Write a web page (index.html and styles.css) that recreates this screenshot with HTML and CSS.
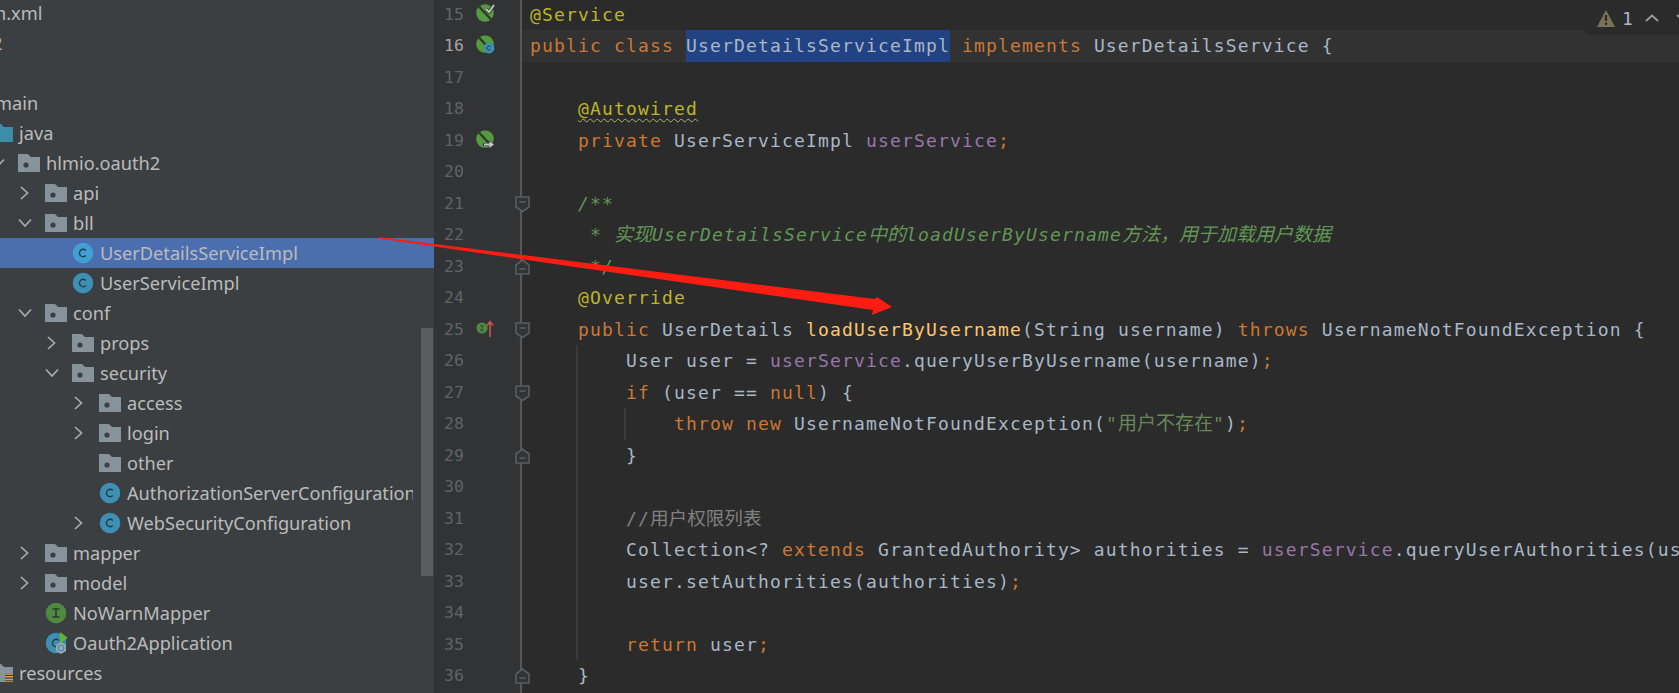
FILE: index.html
```html
<!DOCTYPE html>
<html lang="en">
<head>
<meta charset="utf-8">
<title>UserDetailsServiceImpl</title>
<link rel="stylesheet" href="styles.css">
</head>
<body>
<svg class="defs" aria-hidden="true">
  <symbol id="chev-r" viewBox="0 0 14 14"><path d="M3 1 9.500 7 3 13" fill="none" stroke="currentColor" stroke-width="1.700"/></symbol>
  <symbol id="chev-d" viewBox="0 0 14 14"><path d="M1 3.500 7 10 13 3.500" fill="none" stroke="currentColor" stroke-width="1.700"/></symbol>
  <symbol id="folder" viewBox="0 0 22 18"><path d="M0 0H10L13 3H22V18H0Z" fill="currentColor"/><circle cx="8" cy="11" r="2.600" fill="#3c3f41"/></symbol>
  <symbol id="folder-plain" viewBox="0 0 22 18"><path d="M0 0H10L13 3H22V18H0Z" fill="currentColor"/></symbol>
  <symbol id="cls" viewBox="0 0 22 22"><circle cx="11" cy="11" r="10.300" fill="currentColor"/><path d="M13.800 8.400A3.700 3.700 0 1 0 13.800 13.600" fill="none" stroke="#2c3a42" stroke-width="1.400"/></symbol>
  <symbol id="iface" viewBox="0 0 22 22"><circle cx="11" cy="11" r="10.300" fill="#4d8a3f"/><path d="M7.500 7H14.500M7.500 15H14.500M11 7V15" fill="none" stroke="#2c3a2a" stroke-width="1.500"/></symbol>
  <symbol id="bean" viewBox="0 0 18 18"><circle cx="9" cy="9" r="8.800" fill="#549a3f"/><path d="M3 2.500 15 15.500" stroke="#2f3a2c" stroke-width="2.400"/></symbol>
</svg>

<main class="ide">
  <aside class="sidebar">
    <div class="tree">
      <div class="node d-pom"><span class="slot"></span><span class="lead-file"></span><span class="label">pom.xml</span></div>
      <div class="node d-tiny"><span class="label">2</span></div>
      <div class="node"></div>
      <div class="node d-2"><span class="slot"></span><span class="label">main</span></div>
      <div class="node d-1"><span class="slot"></span><svg class="icon-folder java"><use href="#folder-plain"/></svg><span class="label">java</span></div>
      <div class="node d0"><svg class="chev"><use href="#chev-d"/></svg><svg class="icon-folder"><use href="#folder"/></svg><span class="label">hlmio.oauth2</span></div>
      <div class="node d1"><svg class="chev"><use href="#chev-r"/></svg><svg class="icon-folder"><use href="#folder"/></svg><span class="label">api</span></div>
      <div class="node d1"><svg class="chev"><use href="#chev-d"/></svg><svg class="icon-folder"><use href="#folder"/></svg><span class="label">bll</span></div>
      <div class="node d2 selected"><span class="slot"></span><svg class="icon-class"><use href="#cls"/></svg><span class="label">UserDetailsServiceImpl</span></div>
      <div class="node d2"><span class="slot"></span><svg class="icon-class"><use href="#cls"/></svg><span class="label">UserServiceImpl</span></div>
      <div class="node d1"><svg class="chev"><use href="#chev-d"/></svg><svg class="icon-folder"><use href="#folder"/></svg><span class="label">conf</span></div>
      <div class="node d2"><svg class="chev"><use href="#chev-r"/></svg><svg class="icon-folder"><use href="#folder"/></svg><span class="label">props</span></div>
      <div class="node d2"><svg class="chev"><use href="#chev-d"/></svg><svg class="icon-folder"><use href="#folder"/></svg><span class="label">security</span></div>
      <div class="node d3"><svg class="chev"><use href="#chev-r"/></svg><svg class="icon-folder"><use href="#folder"/></svg><span class="label">access</span></div>
      <div class="node d3"><svg class="chev"><use href="#chev-r"/></svg><svg class="icon-folder"><use href="#folder"/></svg><span class="label">login</span></div>
      <div class="node d3"><span class="slot"></span><svg class="icon-folder"><use href="#folder"/></svg><span class="label">other</span></div>
      <div class="node d3"><span class="slot"></span><svg class="icon-class"><use href="#cls"/></svg><span class="label clipped">AuthorizationServerConfiguration</span></div>
      <div class="node d3"><svg class="chev"><use href="#chev-r"/></svg><svg class="icon-class"><use href="#cls"/></svg><span class="label">WebSecurityConfiguration</span></div>
      <div class="node d1"><svg class="chev"><use href="#chev-r"/></svg><svg class="icon-folder"><use href="#folder"/></svg><span class="label">mapper</span></div>
      <div class="node d1"><svg class="chev"><use href="#chev-r"/></svg><svg class="icon-folder"><use href="#folder"/></svg><span class="label">model</span></div>
      <div class="node d1"><span class="slot"></span><svg class="icon-class"><use href="#iface"/></svg><span class="label">NoWarnMapper</span></div>
      <div class="node d1"><span class="slot"></span>
        <svg class="icon-class" viewBox="0 0 22 22">
          <use href="#cls" width="22" height="22"/>
          <path d="M15 0 23 6 15 11Z" fill="#5fb52f"/>
          <path d="M16 10 21 13V19L16 22 11 19V13Z" fill="#9aa7b0"/>
          <circle cx="16" cy="16" r="2.800" fill="none" stroke="#3d8fb3" stroke-width="1.100"/>
        </svg>
        <span class="label">Oauth2Application</span></div>
      <div class="node d-1"><span class="slot"></span>
        <svg class="icon-folder" viewBox="0 0 22 18">
          <use href="#folder-plain" width="22" height="18"/>
          <path d="M14 9H24V18H14Z" fill="#3c3f41"/>
          <path d="M14 10H24M14 12.700H24M14 15.400H24M14 18H24" stroke="#d9a343" stroke-width="1.500"/>
        </svg>
        <span class="label">resources</span></div>
    </div>
    <div class="scroll-thumb"></div>
  </aside>

  <section class="editor">
    <div class="line"><div class="gutter"><span class="num">15</span><svg class="bean" viewBox="0 0 18 18"><use href="#bean" width="18" height="18"/><path d="M10 5 13 8 18 1" fill="none" stroke="#2f3a2c" stroke-width="3.400"/><path d="M10 5 13 8 18 1" fill="none" stroke="#c4c8cc" stroke-width="1.800"/></svg></div><div class="code"><span class="ann">@Service</span></div></div>
    <div class="line current"><div class="gutter"><span class="num">16</span><svg class="bean" viewBox="0 0 18 18"><use href="#bean" width="18" height="18"/><circle cx="13" cy="13" r="5.400" fill="#3d8fb3"/><path d="M14.600 11.800A2 2 0 1 0 14.600 14.200" fill="none" stroke="#2c3a42" stroke-width="1"/></svg></div><div class="code"><span class="kw">public class </span><span class="sel">UserDetailsServiceImpl</span> <span class="kw">implements </span>UserDetailsService {</div></div>
    <div class="line"><div class="gutter"><span class="num">17</span></div><div class="code"></div></div>
    <div class="line"><div class="gutter"><span class="num">18</span></div><div class="code">    <span class="ann wavy">@Autowired</span></div></div>
    <div class="line"><div class="gutter"><span class="num">19</span><svg class="bean" viewBox="0 0 18 18"><use href="#bean" width="18" height="18"/><path d="M7 13H13V10L19 14.500 13 19V16H7Z" fill="#313335"/><path d="M8 13.500H13.500V11L18 14.500 13.500 18V15.500H8Z" fill="#c4c8cc"/></svg></div><div class="code">    <span class="kw">private </span>UserServiceImpl <span class="field">userService</span><span class="kw">;</span></div></div>
    <div class="line"><div class="gutter"><span class="num">20</span></div><div class="code"></div></div>
    <div class="line"><div class="gutter"><span class="num">21</span><svg class="fold"><path d="M1 1H14V11L7.500 15.500 1 11Z"/><path d="M4.500 6H10.500"/></svg></div><div class="code">    <span class="doc">/**</span></div></div>
    <div class="line"><div class="gutter"><span class="num">22</span></div><div class="code">    <span class="doc"> * <span class="cjk">实现</span>UserDetailsService<span class="cjk">中的</span>loadUserByUsername<span class="cjk">方法，用于加载用户数据</span></span></div></div>
    <div class="line"><div class="gutter"><span class="num">23</span><svg class="fold"><path d="M1 15H14V6L7.500 1 1 6Z"/><path d="M4.500 10H10.500"/></svg></div><div class="code">    <span class="doc"> */</span></div></div>
    <div class="line"><div class="gutter"><span class="num">24</span></div><div class="code">    <span class="ann">@Override</span></div></div>
    <div class="line"><div class="gutter"><span class="num">25</span><svg class="iface-mark"><use href="#iface" width="12" height="12" y="3"/><path d="M14 18V3M11 6.500 14 2.500 17 6.500" fill="none" stroke="#c75450" stroke-width="1.600"/></svg><svg class="fold"><path d="M1 1H14V11L7.500 15.500 1 11Z"/><path d="M4.500 6H10.500"/></svg></div><div class="code">    <span class="kw">public </span>UserDetails <span class="method">loadUserByUsername</span>(String username) <span class="kw">throws </span>UsernameNotFoundException {</div></div>
    <div class="line"><div class="gutter"><span class="num">26</span></div><div class="code guide">        User user = <span class="field">userService</span>.queryUserByUsername(username)<span class="kw">;</span></div></div>
    <div class="line"><div class="gutter"><span class="num">27</span><svg class="fold"><path d="M1 1H14V11L7.500 15.500 1 11Z"/><path d="M4.500 6H10.500"/></svg></div><div class="code guide">        <span class="kw">if </span>(user == <span class="kw">null</span>) {</div></div>
    <div class="line"><div class="gutter"><span class="num">28</span></div><div class="code guide guide-2">            <span class="kw">throw new </span>UsernameNotFoundException(<span class="str">"<span class="cjk">用户不存在</span>"</span>)<span class="kw">;</span></div></div>
    <div class="line"><div class="gutter"><span class="num">29</span><svg class="fold"><path d="M1 15H14V6L7.500 1 1 6Z"/><path d="M4.500 10H10.500"/></svg></div><div class="code guide">        }</div></div>
    <div class="line"><div class="gutter"><span class="num">30</span></div><div class="code guide"></div></div>
    <div class="line"><div class="gutter"><span class="num">31</span></div><div class="code guide">        <span class="cmt">//<span class="cjk">用户权限列表</span></span></div></div>
    <div class="line"><div class="gutter"><span class="num">32</span></div><div class="code guide">        Collection&lt;? <span class="kw">extends </span>GrantedAuthority&gt; authorities = <span class="field">userService</span>.queryUserAuthorities(username);</div></div>
    <div class="line"><div class="gutter"><span class="num">33</span></div><div class="code guide">        user.setAuthorities(authorities)<span class="kw">;</span></div></div>
    <div class="line"><div class="gutter"><span class="num">34</span></div><div class="code guide"></div></div>
    <div class="line"><div class="gutter"><span class="num">35</span></div><div class="code guide">        <span class="kw">return </span>user<span class="kw">;</span></div></div>
    <div class="line"><div class="gutter"><span class="num">36</span><svg class="fold"><path d="M1 15H14V6L7.500 1 1 6Z"/><path d="M4.500 10H10.500"/></svg></div><div class="code">    }</div></div>
    <div class="line"><div class="gutter"></div><div class="code"></div></div>

    <div class="inspect">
      <svg class="warn" viewBox="0 0 18 17"><path d="M9 0 18 17H0Z" fill="#7a7259"/><path d="M9 5V11M9 12.500V15" stroke="#2b2b2b" stroke-width="2.200"/></svg>
      <span class="count">1</span>
      <svg class="up" viewBox="0 0 14 8"><path d="M1 7 7 1.500 13 7" fill="none" stroke="#9c9c9c" stroke-width="1.800"/></svg>
      <svg class="up" viewBox="0 0 14 8"><path d="M1 1 7 6.500 13 1" fill="none" stroke="#9c9c9c" stroke-width="1.800"/></svg>
    </div>
  </section>
</main>

<svg class="arrow" viewBox="0 0 1679 693" aria-hidden="true"><path d="M379 237 875 299 877 297 892 307 872 315 873 310 379 238.500Z" fill="#ff1d12"/></svg>
</body>
</html>
```
FILE: styles.css
```css
* { box-sizing: border-box; }
html, body { margin: 0; height: 693px; overflow: hidden; background: #2b2b2b; }
body { position: relative; }
.defs { display: none; }

.ide { display: flex; width: 1679px; height: 693px; overflow: hidden; }

/* project tree */
.sidebar { position: relative; flex: 0 0 434px; background: #3c3f41; overflow: hidden; }
.tree { margin-top: -2px; font: 18.200px/30px "Noto Sans", sans-serif; color: #bbbbbb; }
.node { display: flex; align-items: center; height: 30px; white-space: nowrap; }
.node.selected { background: #4b6eaf; }
.d-pom { margin-left: -94px; }
.d-tiny { margin-left: -14px; }
.d-2 { margin-left: -65px; }
.d-1 { margin-left: -36px; }
.d0 { margin-left: -9px; }
.d1 { margin-left: 18px; }
.d2 { padding-left: 45px; }
.d3 { padding-left: 72px; }
.slot { flex: 0 0 27px; }
.lead-file { flex: 0 0 28px; }
.d-2 .slot { flex-basis: 54px; }
.chev { flex: 0 0 14px; width: 14px; height: 14px; margin-right: 13px; color: #a9abad; }
.icon-folder { flex: 0 0 22px; width: 22px; height: 18px; color: #87939a; }
.icon-folder.java { color: #3d8ca8; }
.icon-class { flex: 0 0 22px; width: 22px; height: 22px; color: #3d8fb3; }
.selected .icon-class { color: #40a0d6; }
.label { margin-left: 6px; }
.clipped { display: block; width: 286px; overflow: hidden; }
.scroll-thumb { position: absolute; left: 421px; top: 328px; width: 12px; height: 248px; background: #5a5c5e; }

/* editor */
.editor { position: relative; flex: 1 1 0; min-width: 0; overflow: hidden; margin-top: -1.500px; font: 18px/31.500px "DejaVu Sans Mono", "Noto Sans CJK SC", monospace; letter-spacing: 1.160px; color: #a9b7c6; }
.line { display: flex; height: 31.500px; }
.gutter { position: relative; z-index: 1; flex: 0 0 88px; display: flex; align-items: center; padding-left: 10px; background: #313335; border-right: 2px solid #555759; }
.num { flex: 0 0 32px; font-size: 16.500px; letter-spacing: 0; color: #606366; }
.current .num { color: #a4a3a3; }
.bean { width: 18px; height: 18px; margin-top: -3px; overflow: visible; }
.iface-mark { width: 20px; height: 20px; }
.fold { position: absolute; right: -10px; top: 8px; width: 15px; height: 17px; fill: #313335; stroke: #5a5c5e; stroke-width: 1.600; }
.code { flex: 1 1 0; min-width: 0; padding-left: 8px; white-space: pre; overflow: hidden; }
.current .code { background: #323232; }
.guide { background: linear-gradient(#3a3a3a, #3a3a3a) 54px 0 / 2px 100% no-repeat; }
.guide.guide-2 { background: linear-gradient(#3a3a3a, #3a3a3a) 54px 0 / 2px 100% no-repeat, linear-gradient(#3a3a3a, #3a3a3a) 102px 0 / 2px 100% no-repeat; }

.kw { color: #cc7832; }
.ann { color: #bbb529; }
.wavy { text-decoration: underline wavy #b3ae74 1px; text-underline-offset: 3px; }
.field { color: #9876aa; }
.method { color: #ffc66d; }
.doc { color: #629755; font-style: italic; }
.cmt { color: #808080; }
.str { color: #6a8759; }
.cjk { font-family: "Noto Sans CJK SC", sans-serif; font-size: 19px; line-height: 0; letter-spacing: 0; }
.cmt .cjk { font-size: 18.600px; }
.sel { display: inline-block; background: #214283; }

/* inspection widget */
.inspect { position: absolute; top: 0; left: 1149px; width: 96px; height: 36.500px; display: flex; align-items: center; padding: 3px 0 0 14px; background: #2b2b2b; border-bottom-left-radius: 6px; z-index: 2; }
.warn { flex: 0 0 18px; width: 18px; height: 17px; }
.count { flex: 0 0 23px; margin-left: 7px; font-size: 18px; letter-spacing: 0; }
.up { flex: 0 0 14px; width: 14px; height: 8px; margin-right: 17px; }

.arrow { position: absolute; left: 0; top: 0; width: 1679px; height: 693px; z-index: 3; pointer-events: none; }
```
